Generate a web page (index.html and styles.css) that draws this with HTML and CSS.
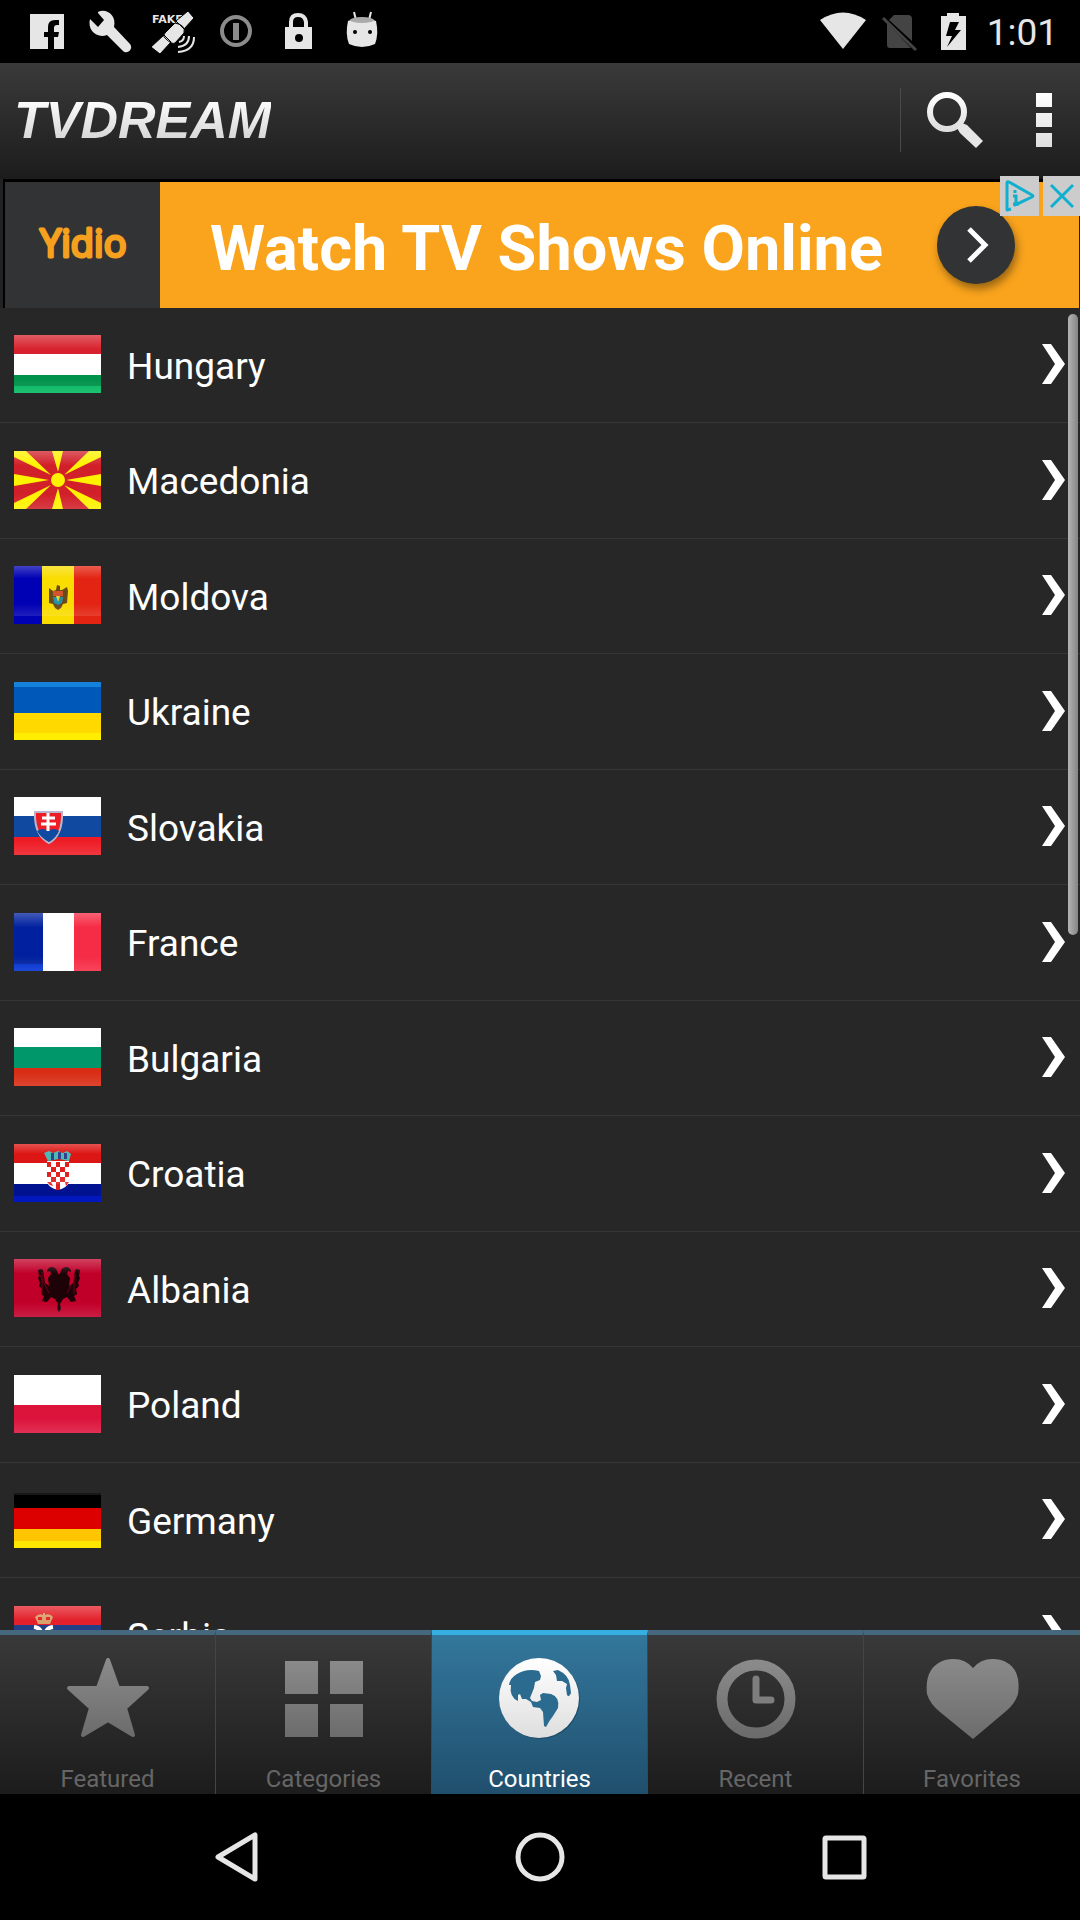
FILE: index.html
```html
<!DOCTYPE html>
<html lang="en">
<head>
<meta charset="utf-8">
<meta name="viewport" content="width=device-width, initial-scale=1">
<title>TVDream - Countries</title>
<link rel="stylesheet" href="styles.css">
</head>
<body>
<svg class="defs" aria-hidden="true">
  <defs>
    <linearGradient id="gloss" x1="0" y1="0" x2="0" y2="1">
      <stop offset="0" stop-color="#fff" stop-opacity=".26"/>
      <stop offset=".25" stop-color="#fff" stop-opacity="0"/>
      <stop offset=".75" stop-color="#fff" stop-opacity="0"/>
      <stop offset="1" stop-color="#fff" stop-opacity=".12"/>
    </linearGradient>
    <linearGradient id="grey" x1="0" y1="0" x2="0" y2="1">
      <stop offset="0" stop-color="#8a8a8a"/><stop offset="1" stop-color="#6c6c6c"/>
    </linearGradient>
    <linearGradient id="light" x1="0" y1="0" x2="0" y2="1">
      <stop offset="0" stop-color="#fff"/><stop offset="1" stop-color="#dedede"/>
    </linearGradient>
    <symbol id="chevron" viewBox="0 0 24 42"><path d="M0 1h9l14 20L9 41H0l13-20z" fill="#fff"/></symbol>
  </defs>
</svg>

<div class="status">
  <div class="notifications">
    <svg class="sicon" viewBox="0 0 48 48"><path fill="#e6e6e6" fill-rule="evenodd" d="M7 7h34v35H31V30h4l1-5h-5v-4q0-3 3-3h2v-5h-4q-7 0-7 7v5h-4v5h4v12H7z"/></svg>
    <svg class="sicon" viewBox="0 0 48 48"><path fill="#e6e6e6" d="M12 5C20 1 31 8 28 20L44 37c4 5-3 11-7 7L21 28C11 32 1 23 4 12l8 8 6-7-6-7z"/></svg>
    <svg class="sicon" viewBox="0 0 48 48"><text class="fake" x="3" y="16">FAKE</text><g stroke="#000" stroke-width="1" fill="#e6e6e6"><path d="M2 40L15 28l7 7-11 12zM27 14L39 4l6 7-10 11zM16 26l10-10q11 2 9 10L26 36q-3 2-10-5-3-2 0-5z"/></g><path d="M30 35q5-1 5-6M29 40q11-1 11-11M29 45q16-1 16-15" fill="none" stroke="#e6e6e6" stroke-width="2"/></svg>
    <svg class="sicon" viewBox="0 0 48 48"><circle cx="24" cy="24" r="14" fill="none" stroke="#8c8c8c" stroke-width="4"/><path d="M24 16v17" stroke="#8c8c8c" stroke-width="6"/></svg>
    <svg class="sicon" viewBox="0 0 48 48"><path d="M16 22v-7q0-7 7-7t8 7v7" fill="none" stroke="#e6e6e6" stroke-width="4"/><rect x="10" y="20" width="27" height="22" fill="#e6e6e6"/><circle cx="24" cy="31" r="4" fill="#000"/></svg>
    <svg class="sicon" viewBox="0 0 48 48"><path d="M16 5l2 8M33 5l-2 8" stroke="#e6e6e6" stroke-width="2"/><path d="M10 14q14-7 28 0 3 13-1 23-13 6-26 0-4-10-1-23z" fill="#e6e6e6"/><ellipse cx="24" cy="13" rx="12" ry="3" fill="#aaa"/><circle cx="17" cy="25" r="2" fill="#000"/><circle cx="32" cy="25" r="2" fill="#000"/></svg>
  </div>
  <div class="system">
    <svg class="sicon" viewBox="0 0 48 48"><path fill="#e6e6e6" d="M1 13q23-15 46 0L24 42z"/></svg>
    <svg class="sicon" viewBox="0 0 48 48"><path fill="#444" d="M19 8h14q4 0 4 4v22L14 13zM12 16l24 25H15q-3 0-3-3z"/><path d="M8 11l33 32" stroke="#444" stroke-width="3"/></svg>
    <svg class="sicon" viewBox="0 0 48 48"><path fill="#e6e6e6" fill-rule="evenodd" d="M16 6h12v3h7v34H10V9h6zM19 15l-4 14h6l-5 11 14-17h-6l4-8z"/></svg>
    <time class="clock">1:01</time>
  </div>
</div>

<header class="appbar">
  <h1 class="logo">TVDREAM</h1>
  <div class="actions">
    <button class="action search" type="button" aria-label="Search"><svg width="58" height="58" viewBox="0 0 58 58"><circle cx="21" cy="21" r="17" fill="none" stroke="url(#light)" stroke-width="6"/><path d="M31 37l5-5 5 2 16 16-7 7-16-15z" fill="#e6e6e6"/></svg></button>
    <button class="action more" type="button" aria-label="More options"><svg width="16" height="54" viewBox="0 0 16 54"><path d="M0 0h16v14H0zM0 20h16v14H0zM0 40h16v14H0z" fill="url(#light)"/></svg></button>
  </div>
</header>

<aside class="ad" aria-label="Advertisement">
  <a class="ad-link" href="#">
    <span class="ad-brand"><svg width="100" height="60" viewBox="0 0 100 60"><text class="yidio" x="7" y="42">Yidio</text></svg></span>
    <span class="ad-body">
      <span class="ad-title">Watch TV Shows Online</span>
      <span class="ad-go"><svg width="26" height="40" viewBox="0 0 26 40"><path d="M6 4l16 16L6 36" fill="none" stroke="#fff" stroke-width="5"/></svg></span>
    </span>
  </a>
  <div class="ad-tools">
    <button class="ad-tool" type="button" aria-label="Ad choices"><svg width="39" height="40" viewBox="0 0 39 40"><path d="M11 33l-4 1V7q0-2 2-1l23 13q2 1 0 2L15 29v-2" fill="none" stroke="#0fb0cf" stroke-width="3" stroke-linejoin="round"/><path d="M13 20h3v8M13 28h6M15 14v3" fill="none" stroke="#0fb0cf" stroke-width="3"/></svg></button>
    <button class="ad-tool" type="button" aria-label="Close ad"><svg width="37" height="40" viewBox="0 0 37 40"><path d="M8 9l22 22M30 9L8 31" stroke="#0fb0cf" stroke-width="3"/></svg></button>
  </div>
</aside>

<main class="content">
  <ul class="list">
    <li><a class="row" href="#"><svg class="flag" viewBox="0 0 87 58"><path fill="#d7222d" d="M0 0h87v19H0z"/><path fill="#fff" d="M0 19h87v21H0z"/><path fill="#00914a" d="M0 40h87v11H0z"/><path fill="#00b85f" d="M0 51h87v7H0z"/><path fill="url(#gloss)" d="M0 0h87v58H0z"/></svg><span>Hungary</span><svg class="go"><use href="#chevron"/></svg></a></li>
    <li><a class="row" href="#"><svg class="flag" viewBox="0 0 87 58"><path fill="#d2202a" d="M0 0h87v58H0z"/><path fill="#fff200" d="M38 0h11l-5 21zM38 58h11l-5-21zM0 23l35 6-35 6zM87 23l-35 6 35 6zM0 0h12l25 24L0 6zM87 0H75L50 24 87 6zM0 58h12l25-24L0 52zM87 58H75L50 34l37 18z"/><circle cx="44" cy="29" r="8" fill="#fff200" stroke="#d2202a" stroke-width="2"/><path fill="url(#gloss)" d="M0 0h87v58H0z"/></svg><span>Macedonia</span><svg class="go"><use href="#chevron"/></svg></a></li>
    <li><a class="row" href="#"><svg class="flag" viewBox="0 0 87 58"><path fill="#0000b4" d="M0 0h28v58H0z"/><path fill="#f9dc00" d="M28 0h32v58H28z"/><path fill="#e32412" d="M60 0h27v58H60z"/><path fill="#6a4a1c" d="M42 24l1-5 3 1v4h2l5-3 1 4-1 12-4 1-2 4-3 2-3-2-2-4-4-1v-15l4 3z"/><path fill="#d3542a" d="M39 25h10v5H39z"/><path fill="#2791a8" d="M39 31h10l-1 6-4 2-4-2z"/><path fill="#ead52a" d="M42 30h4l-2 6z"/><path fill="url(#gloss)" d="M0 0h87v50H0z"/></svg><span>Moldova</span><svg class="go"><use href="#chevron"/></svg></a></li>
    <li><a class="row" href="#"><svg class="flag" viewBox="0 0 87 58"><path fill="#0059b8" d="M0 0h87v31H0z"/><path fill="#ffd900" d="M0 31h87v27H0z"/><path fill="#1d93ea" opacity=".7" d="M0 0h87v5H0z"/><path fill="#ffee00" d="M0 51h87v7H0z"/></svg><span>Ukraine</span><svg class="go"><use href="#chevron"/></svg></a></li>
    <li><a class="row" href="#"><svg class="flag" viewBox="0 0 87 58"><path fill="#fff" d="M0 0h87v19H0z"/><path fill="#0f4aa0" d="M0 19h87v21H0z"/><path fill="#ee1c25" d="M0 40h87v18H0z"/><path fill="#ee1c25" stroke="#b8b5cc" stroke-width="2" d="M21 15h27q1 23-13 31-15-8-14-31z"/><path fill="#0f4aa0" d="M23 34q6-4 11 0 6-4 11 0-3 7-10 11-8-4-12-11z"/><path d="M34 16v18M28 21h13M27 27h15" stroke="#fff" stroke-width="3"/><path fill="url(#gloss)" d="M0 0h87v58H0z"/></svg><span>Slovakia</span><svg class="go"><use href="#chevron"/></svg></a></li>
    <li><a class="row" href="#"><svg class="flag" viewBox="0 0 87 58"><path fill="#00209f" d="M0 0h29v58H0z"/><path fill="#0030d0" d="M0 51h29v7H0z"/><path fill="#fff" d="M29 0h31v58H29z"/><path fill="#f62b45" d="M60 0h27v58H60z"/><path fill="url(#gloss)" d="M0 0h87v58H0z"/></svg><span>France</span><svg class="go"><use href="#chevron"/></svg></a></li>
    <li><a class="row" href="#"><svg class="flag" viewBox="0 0 87 58"><path fill="#fff" d="M0 0h87v19H0z"/><path fill="#00976b" d="M0 19h87v21H0z"/><path fill="#d82c14" d="M0 40h87v18H0z"/><path fill="url(#gloss)" d="M0 0h87v58H0z"/></svg><span>Bulgaria</span><svg class="go"><use href="#chevron"/></svg></a></li>
    <li><a class="row" href="#"><svg class="flag" viewBox="0 0 87 58"><path fill="#dc1614" d="M0 0h87v19H0z"/><path fill="#fff" d="M0 19h87v21H0z"/><path fill="#001290" d="M0 40h87v12H0z"/><path fill="#0018bd" d="M0 52h87v6H0z"/><path fill="#fff" d="M33 17h22v21q-2 6-11 8-9-2-11-8z"/><path fill="#e02020" d="M33 18h4v5h-4zM42 18h4v5h-4zM51 18h4v5h-4zM37 23h5v5h-5zM46 23h5v5h-5zM33 28h4v5h-4zM42 28h4v5h-4zM51 28h4v5h-4zM37 33h5v5h-5zM46 33h5v5h-5zM33 38h4l2 4-3-1zM42 38h4v8h-4zM51 38h4l-3 4z"/><path fill="#4bb9b4" d="M30 9l5-2 4 2 5-2 5 2 4-2 4 3-2 7-10-2-11 2z"/><path fill="#34408c" d="M37 9h3v7h-3zM44 8h3v7h-3zM50 9h3v6h-3z"/><path fill="url(#gloss)" d="M0 0h87v40H0z"/></svg><span>Croatia</span><svg class="go"><use href="#chevron"/></svg></a></li>
    <li><a class="row" href="#"><svg class="flag" viewBox="0 0 87 58"><path fill="#c1002a" d="M0 0h87v58H0z"/><path fill="#1d0207" d="M44 15q-1-7-7-7-4 1-4 5l3-1 1 3-3 4 1 8-4-3-2-13-2-1-3 1 1 6-1 2 2 5-1 3 3 3-1 5 3 2-2 5 5 1 4-5 4 2 3 5-1 5 2 3 2-3-1-5 3-5 4-2 4 5 5-1-2-5 3-2-1-5 3-3-1-3 2-5-1-2 1-6-3-1-2 1-2 13-4 3 1-8-3-4 1-3 3 1q0-4-4-5-6 0-7 7z"/><path d="M28 13v22M60 13v22M26 16l9 18M62 16l-9 18" stroke="#c1002a" stroke-width="1" opacity=".5"/><path fill="url(#gloss)" d="M0 0h87v58H0z"/></svg><span>Albania</span><svg class="go"><use href="#chevron"/></svg></a></li>
    <li><a class="row" href="#"><svg class="flag" viewBox="0 0 87 58"><path fill="#fff" d="M0 0h87v30H0z"/><path fill="#dc143c" d="M0 30h87v28H0z"/><path fill="url(#gloss)" d="M0 0h87v58H0z"/></svg><span>Poland</span><svg class="go"><use href="#chevron"/></svg></a></li>
    <li><a class="row" href="#"><svg class="flag" viewBox="0 0 87 58"><path fill="#181818" d="M0 3h87v6H0z"/><path fill="#000" d="M0 5h87v13H0z"/><path fill="#dc0000" d="M0 18h87v21H0z"/><path fill="#ffc600" d="M0 39h87v12H0z"/><path fill="#ffe600" d="M0 51h87v7H0z"/></svg><span>Germany</span><svg class="go"><use href="#chevron"/></svg></a></li>
    <li><a class="row" href="#"><svg class="flag" viewBox="0 0 87 58"><path fill="#e3202b" d="M0 0h87v19H0z"/><path fill="#233f86" d="M0 19h87v21H0z"/><path fill="#fff" d="M0 40h87v18H0z"/><path d="M20 21q9 1 8 13M39 21q-9 1-8 13" fill="none" stroke="#fff" stroke-width="4"/><path fill="#d9a06a" d="M21 11q4-4 8-2V7h2v2q5-2 8 2l-3 7H24z"/><path fill="#e3202b" d="M24 11h4v3h-4zM32 11h4v3h-4z"/><path fill="url(#gloss)" d="M0 0h87v58H0z"/></svg><span>Serbia</span><svg class="go"><use href="#chevron"/></svg></a></li>
  </ul>
  <div class="scrollbar"></div>
</main>

<nav class="tabs" aria-label="Sections">
  <a class="tab" href="#"><svg width="94" height="82" viewBox="0 0 94 82"><path d="M47 3l10 28h29L64 51l8 27-25-15-25 15 8-27L8 31h29z" fill="url(#grey)" stroke="url(#grey)" stroke-width="4" stroke-linejoin="round"/></svg><span>Featured</span></a>
  <a class="tab" href="#"><svg width="94" height="82" viewBox="0 0 94 82"><path d="M8 4h33v33H8zM53 4h33v33H53zM8 47h33v33H8zM53 47h33v33H53z" fill="url(#grey)"/></svg><span>Categories</span></a>
  <a class="tab active" href="#" aria-current="page"><svg width="94" height="82" viewBox="2 12 94 82"><circle cx="49" cy="54" r="40" fill="#123a52" opacity=".5"/><circle cx="48" cy="53" r="40" fill="url(#light)"/><path fill="#2a6b8f" d="M18 40q1-7 8-11 10-6 22-3l2 5-1 4-5 2-1 6-2 5-2 5 2 3 5 1 4-2-1-5 3-2 8 1q9 3 7 14l-5 8q-4 5-7 11l-2-1-1-14-3-4-7-1-2-5-5-3h-4l-2-5-2 1v6q-9-4-7-16zM62 26l5-1q11 5 12 15l1 8q-2 5-4 2l-1-7 1-4-5-3h-5l-1-6z"/></svg><span>Countries</span></a>
  <a class="tab" href="#"><svg width="94" height="82" viewBox="0 0 94 82"><circle cx="47" cy="42" r="34" fill="none" stroke="url(#grey)" stroke-width="11"/><path d="M47 22v21h15" fill="none" stroke="#7e7e7e" stroke-width="7" stroke-linecap="round" stroke-linejoin="round"/></svg><span>Recent</span></a>
  <a class="tab" href="#"><svg width="94" height="82" viewBox="0 0 94 82"><path d="M48 11Q58-1 76 3q21 7 17 34-3 10-13 18L48 82 15 55Q5 47 2 37-1 10 20 3q18-4 28 8z" fill="url(#grey)"/></svg><span>Favorites</span></a>
</nav>

<div class="navbar">
  <button type="button" aria-label="Back"><svg width="52" height="52" viewBox="0 0 52 52"><path d="M45 4v44L8 26z" fill="none" stroke="#e6e6e6" stroke-width="5" stroke-linejoin="round"/></svg></button>
  <button type="button" aria-label="Home"><svg width="52" height="52" viewBox="0 0 52 52"><circle cx="26" cy="26" r="22" fill="none" stroke="#e6e6e6" stroke-width="5"/></svg></button>
  <button type="button" aria-label="Overview"><svg width="52" height="52" viewBox="0 0 52 52"><rect x="7" y="7" width="39" height="39" rx="1" fill="none" stroke="#e6e6e6" stroke-width="5"/></svg></button>
</div>
</body>
</html>
```

FILE: styles.css
```css
* { box-sizing: border-box; }

body {
  margin: 0;
  height: 100vh;
  display: flex;
  flex-direction: column;
  background: #272727;
  color: #fff;
  font-family: Roboto, "Liberation Sans", sans-serif;
}

button {
  margin: 0;
  padding: 0;
  border: 0;
  background: none;
  cursor: pointer;
}

a { color: inherit; text-decoration: none; }
svg { display: block; flex: none; }
.defs { position: absolute; width: 0; height: 0; }

/* System status bar */
.status {
  flex: none;
  display: flex;
  justify-content: space-between;
  height: 63px;
  padding: 7px 22px 0 23px;
  background: #000;
}
.notifications { display: flex; gap: 15px; }
.system { display: flex; gap: 8px; }
.sicon { width: 48px; height: 48px; }
.fake { font: bold 11px "DejaVu Sans", sans-serif; fill: #e6e6e6; }
.clock { font-size: 37px; line-height: 52px; color: #e6e6e6; }

/* App bar */
.appbar {
  flex: none;
  display: flex;
  align-items: center;
  justify-content: space-between;
  height: 116px;
  padding: 0 28px 2px 14px;
  background: linear-gradient(#3a3a3a, #1c1c1c);
}
.logo {
  margin: 0;
  font: italic bold 52px/72px "Liberation Sans", sans-serif;
  color: transparent;
  background: linear-gradient(#fff 20%, #d4d4d4 80%);
  background-clip: text;
  -webkit-background-clip: text;
}
.actions { display: flex; align-items: center; height: 64px; border-left: 1px solid #4a4a4a; }
.search { margin: 0 52px 0 25px; }

/* Banner */
.ad {
  position: relative;
  flex: none;
  height: 129px;
  padding: 0 1px 0 3px;
  background: #222;
}
.ad-link {
  display: flex;
  height: 100%;
  border: solid #000;
  border-width: 3px 0 0 2px;
}
.ad-brand {
  display: flex;
  align-items: center;
  justify-content: center;
  width: 155px;
  background: #323334;
}
.yidio {
  font: 38px "Open Sans", sans-serif;
  fill: #f5a01f;
  stroke: #f5a01f;
  stroke-width: 3px;
  stroke-linejoin: round;
}
.ad-body {
  flex: 1;
  display: flex;
  align-items: center;
  justify-content: space-between;
  padding: 0 64px 0 50px;
  background: #faa41d;
}
.ad-title { padding-top: 8px; font-size: 63px; line-height: 76px; font-weight: 700; }
.ad-go {
  display: flex;
  align-items: center;
  justify-content: center;
  width: 78px;
  height: 78px;
  border-radius: 50%;
  background: #323334;
  box-shadow: 2px 5px 8px rgba(0, 0, 0, .4);
}
.ad-tools {
  position: absolute;
  top: -3px;
  right: 0;
  display: flex;
  gap: 4px;
}
.ad-tool { background: #ccc; }

/* Country list */
.content {
  position: relative;
  flex: 1;
  min-height: 0;
  overflow: hidden;
}
.list { list-style: none; margin: 0; padding: 0; }
.row {
  display: flex;
  align-items: center;
  height: 115px;
  padding: 0 14px 2px;
  border-bottom: 1px solid #363636;
  font-size: 37px;
}
.list li:nth-child(even) .row { height: 116px; }
.flag { width: 87px; height: 58px; margin-right: 26px; }
.row span { flex: 1; padding-top: 4px; }
.go { width: 24px; height: 42px; }
.scrollbar {
  position: absolute;
  top: 6px;
  right: 2px;
  width: 10px;
  height: 47%;
  border-radius: 5px;
  background: linear-gradient(90deg, #b4b4b4, #858585);
}

/* Bottom tabs */
.tabs {
  flex: none;
  display: grid;
  grid-template-columns: repeat(5, 1fr);
  background: linear-gradient(#3a3a3a, #1c1c1c);
}
.tab {
  display: flex;
  flex-direction: column;
  align-items: center;
  justify-content: space-between;
  height: 164px;
  padding-top: 22px;
  border-top: 5px solid #45687f;
  border-right: 1px solid #454545;
  color: #666;
  font-size: 24px;
  line-height: 30px;
}
.tab:last-child { border-right: 0; }
.tab.active {
  border-top-color: #35aee2;
  border-right-color: #20506f;
  background: linear-gradient(#33779c, #204f6d);
  color: #fff;
}

/* System navigation */
.navbar {
  flex: none;
  display: flex;
  align-items: center;
  justify-content: center;
  gap: 252px;
  height: 126px;
  background: #000;
}
```
